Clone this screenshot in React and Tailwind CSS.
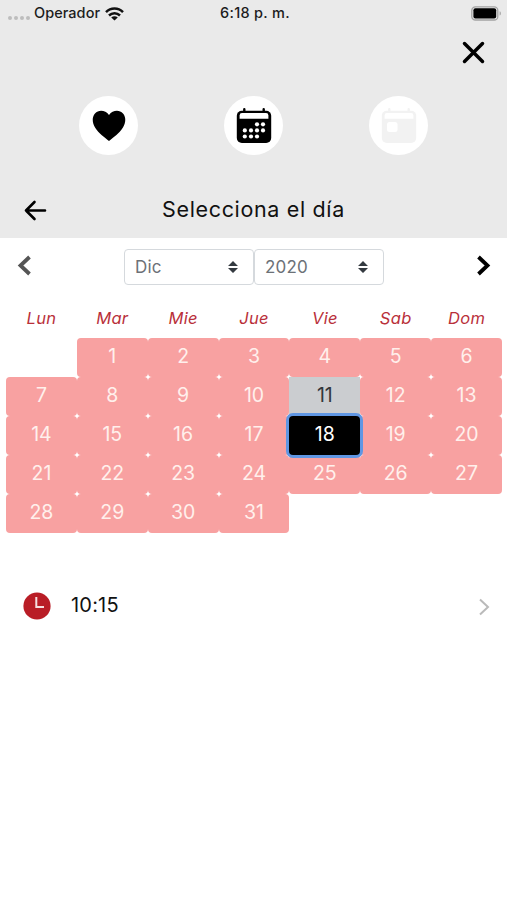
import { useState } from "react"
import clsx from "clsx"

const WEEKDAYS = ["Lun", "Mar", "Mie", "Jue", "Vie", "Sab", "Dom"]
const FIRST_WEEKDAY = 1
const DAYS_IN_MONTH = 31
const TODAY = 11

const WifiIcon = () => (
  <svg width="19" height="14" viewBox="0 0 19 14" fill="none" stroke="#111" strokeWidth="2.5">
    <path d="M1 5.2C5.8.4 13.2.4 18 5.2" />
    <path d="M4 8.5c3.2-3.1 7.8-3.1 11 0" />
    <path d="M9.5 13.6 6.2 10.500c1.9-1.8 4.7-1.8 6.6 0z" fill="#111" stroke="none" />
  </svg>
)

const BatteryIcon = () => (
  <svg width="31" height="15" viewBox="0 0 31 15">
    <rect x="0.8" y="0.8" width="26" height="13.2" rx="3.6" fill="none" stroke="#a3a3a3" strokeWidth="1.3" />
    <rect x="2.4" y="2.3" width="22.8" height="10.2" rx="2" fill="#000" />
    <path d="M28.6 5.2c1.7.6 1.7 3.8 0 4.4z" fill="#a3a3a3" />
  </svg>
)

const HeartIcon = () => (
  <svg width="34" height="32" viewBox="0 0 34 32">
    <path
      d="M17 31C13 27.800 6.600 23.200 3.200 17.800 0 12.700-.1 7 3 3.500 6.800-.6 13.400.2 17 5c3.600-4.800 10.200-5.600 14-1.500 3.100 3.500 3 9.200-.2 14.300C27.400 23.200 21 27.800 17 31z"
      fill="#000"
    />
  </svg>
)

const CalendarFrame = ({ color, children }) => (
  <svg width="36" height="36" viewBox="0 0 36 36">
    <path d="M8.300 1.200v5M27.700 1.200v5" stroke={color} strokeWidth="2.400" strokeLinecap="round" />
    <rect x=".8" y="2.800" width="34.400" height="32.200" rx="5" fill={color} />
    <path d="M3.600 10.800V7.500a2.400 2.400 0 0 1 2.400-2.400h24a2.400 2.400 0 0 1 2.400 2.400v3.300z" fill="#fff" />
    {children}
  </svg>
)

const MONTH_DOTS = [
  [21, 16.3], [27, 16.3],
  [8.8, 22.4], [15, 22.4], [21, 22.4], [27, 22.4],
  [8.8, 28.5], [15, 28.5], [21, 28.5],
]

const MonthIcon = () => (
  <CalendarFrame color="#000">
    {MONTH_DOTS.map(([x, y]) => (
      <circle key={`${x}-${y}`} cx={x} cy={y} r="2.1" fill="#fff" />
    ))}
  </CalendarFrame>
)

const DayIcon = () => (
  <CalendarFrame color="#f2f2f2">
    <rect x="6" y="14" width="10.500" height="10" rx="2.500" fill="#fff" />
  </CalendarFrame>
)

const ClockIcon = () => (
  <svg width="28" height="28" viewBox="0 0 28 28">
    <circle cx="14" cy="14" r="13.600" fill="#b91d26" />
    <path d="M13.300 5v10H21" fill="none" stroke="#f5dfe0" strokeWidth="2" />
  </svg>
)

const SortIcon = () => (
  <svg width="10" height="12" viewBox="0 0 10 12" fill="#343a40">
    <path d="M0 5 5 0l5 5zM0 7l5 5 5-5z" />
  </svg>
)

const StatusBar = () => (
  <div className="grid h-[27px] grid-cols-3 items-center pl-2 pr-[5px] font-['Inter',sans-serif] text-[14.500px] font-medium text-[#1c1c1c]">
    <div className="flex items-center">
      <div className="mr-1 mt-2 flex gap-[2px]">
        {[0, 1, 2, 3].map((dot) => (
          <span key={dot} className="h-[4px] w-[4px] rounded-full bg-[#bdbdbd]" />
        ))}
      </div>
      <span className="mr-[5px] pb-px tracking-[0.050px]">Operador</span>
      <WifiIcon />
    </div>
    <span className="pb-px text-center tracking-[0.300px]">6:18 p. m.</span>
    <div className="flex justify-end">
      <BatteryIcon />
    </div>
  </div>
)

const RoundButton = ({ children }) => (
  <button className="flex h-[59px] w-[59px] items-center justify-center rounded-full bg-white">{children}</button>
)

const SelectBox = ({ value }) => (
  <button className="flex h-9 w-[130px] items-center justify-between rounded-[4px] border-[1.500px] border-[#d5d9dd] pl-[10px] pr-[15px] text-[17px] tracking-[0.200px] text-[#6c7177]">
    <span className="pt-[2px]">{value}</span>
    <SortIcon />
  </button>
)

const DayCell = ({ day, selected, onSelect }) => (
  <button
    onClick={() => onSelect(day)}
    className={clsx(
      "h-[39px] pb-px text-[19.500px]",
      selected && "relative z-10 rounded-[4px] bg-black text-white ring-[3px] ring-[#5f96e3]",
      !selected && day === TODAY && "bg-[#cbcdd0] text-[#33373b]",
      !selected && day !== TODAY && "rounded-[4px] bg-[#f8a1a1] text-[#fff0ec]"
    )}
  >
    {day}
  </button>
)

const App = () => {
  const [selectedDay, setSelectedDay] = useState(18)
  const days = Array.from({ length: DAYS_IN_MONTH }, (_, i) => i + 1)

  return (
    <div className="min-h-screen w-full bg-white font-['Inter',sans-serif] text-[#111]">
      {/* Header */}
      <header className="flex h-[238px] flex-col bg-[#eaeaea]">
        <StatusBar />
        <div className="flex h-[50px] justify-end pr-[22px] pt-[14px]">
          <button className="h-[23px] w-[23px]">
            <svg width="23" height="23" viewBox="0 0 23 23" stroke="#000" strokeWidth="3.500" strokeLinecap="round">
              <path d="m2.500 2.500 18 18M20.500 2.500l-18 18" />
            </svg>
          </button>
        </div>
        <div className="flex justify-between px-[79px] pt-[19px]">
          <RoundButton>
            <HeartIcon />
          </RoundButton>
          <RoundButton>
            <MonthIcon />
          </RoundButton>
          <RoundButton>
            <DayIcon />
          </RoundButton>
        </div>
        <div className="mt-auto flex h-[55px] items-center px-6">
          <svg width="23" height="21" viewBox="0 0 23 21" fill="none" stroke="#000" strokeWidth="2.600" strokeLinecap="round" strokeLinejoin="round">
            <path d="M21 10.500H2M10.500 2 2 10.500l8.500 8.500" />
          </svg>
          <h1 className="flex-1 pb-[2px] pr-[23px] text-center text-[21.500px] tracking-[0.650px]">Selecciona el día</h1>
        </div>
      </header>

      {/* Month navigation */}
      <div className="flex h-[58px] items-center justify-between pl-[17px] pr-4">
        <svg width="15" height="21" viewBox="0 0 15 21" fill="none" stroke="#555" strokeWidth="3.800" className="mb-1">
          <path d="m12.500 2-9 8.500 9 8.500" />
        </svg>
        <div className="flex">
          <SelectBox value="Dic" />
          <SelectBox value="2020" />
        </div>
        <svg width="15" height="21" viewBox="0 0 15 21" fill="none" stroke="#000" strokeWidth="3.800" className="mb-1">
          <path d="m2.500 2 9 8.500-9 8.500" />
        </svg>
      </div>

      {/* Calendar */}
      <div className="pl-[6px] pr-[5px]">
        <div className="grid h-[42px] grid-cols-7 items-center pt-[2px] text-center text-[16.500px] italic tracking-[0.300px] text-[#b9303a]">
          {WEEKDAYS.map((name) => (
            <span key={name}>{name}</span>
          ))}
        </div>
        <div className="grid grid-cols-7">
          {Array.from({ length: FIRST_WEEKDAY }, (_, i) => (
            <span key={`empty-${i}`} />
          ))}
          {days.map((day) => (
            <DayCell key={day} day={day} selected={day === selectedDay} onSelect={setSelectedDay} />
          ))}
        </div>
      </div>

      {/* Time */}
      <div className="mt-[53px] flex h-10 items-center pl-[23px] pr-[17px]">
        <ClockIcon />
        <span className="flex-1 pb-[3px] pl-[20px] text-[20px] tracking-[0.200px]">10:15</span>
        <svg width="11" height="18" viewBox="0 0 11 18" fill="none" stroke="#bababa" strokeWidth="2" className="mt-[2px]">
          <path d="m1 1.500 8 7.500-8 7.500" />
        </svg>
      </div>
    </div>
  )
}

export default App
